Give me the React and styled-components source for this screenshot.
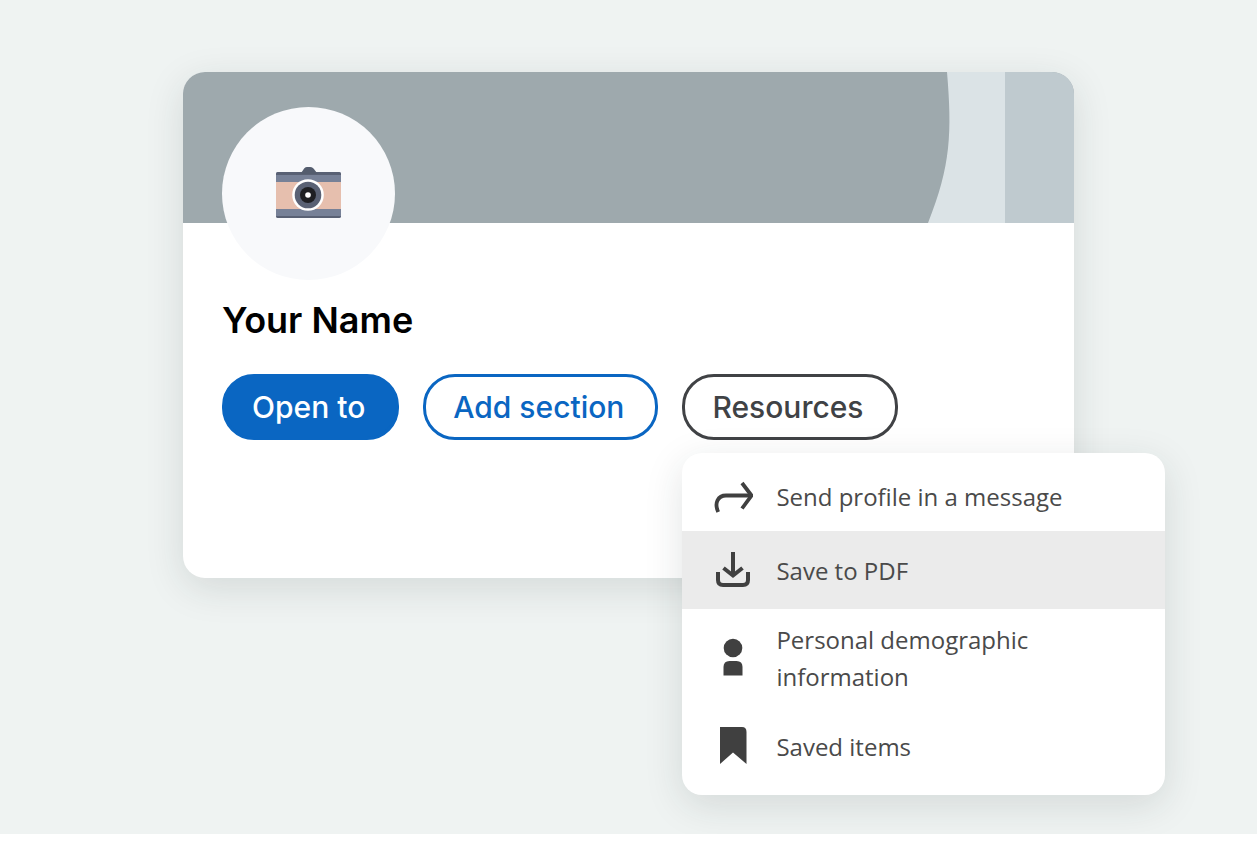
import React from "react";
import styled, { createGlobalStyle, css } from "styled-components";

const GlobalStyle = createGlobalStyle`
  *, *::before, *::after { box-sizing: border-box; }
  body {
    margin: 0;
    background: #ffffff;
    font-family: Inter, "Liberation Sans", sans-serif;
  }
`;

const Stage = styled.main`
  padding: 72px 183px 256px;
  background: #eff3f2;
`;

const Card = styled.section`
  min-height: 506px;
  border-radius: 22px;
  background: #ffffff;
  box-shadow: 0 10px 38px rgba(30, 50, 45, 0.13);
`;

const Banner = styled.div`
  display: flex;
  justify-content: flex-end;
  height: 151px;
  border-radius: 22px 22px 0 0;
  overflow: hidden;
  background: #9ea9ad;
`;

const BannerArt = styled.svg`
  display: block;
  width: 146px;
  height: 151px;
`;

const Profile = styled.div`
  padding: 0 39px 136px;
`;

const Avatar = styled.button`
  display: flex;
  align-items: center;
  justify-content: center;
  width: 173px;
  height: 173px;
  margin-top: -116px;
  padding: 0;
  border: 0;
  border-radius: 50%;
  background: #f8f9fb;
`;

const Name = styled.h1`
  margin: 18px 0 0;
  font-size: 36px;
  line-height: 44px;
  font-weight: 600;
  color: #000000;
`;

const Actions = styled.div`
  display: flex;
  align-items: flex-start;
  gap: 24px;
  margin-top: 32px;
`;

const tones = {
  filled: css`
    border-color: #0a66c2;
    background: #0a66c2;
    color: #ffffff;
  `,
  outline: css`
    border-color: #0a66c2;
    color: #0a66c2;
  `,
  neutral: css`
    border-color: #404245;
    color: #404245;
  `,
};

const Pill = styled.button`
  display: block;
  height: 66px;
  padding: 0 31px 0 27px;
  border: 3px solid;
  border-radius: 32px;
  background: transparent;
  font-family: inherit;
  font-size: 30px;
  line-height: 36px;
  font-weight: 450;
  white-space: nowrap;
  ${({ $tone }) => tones[$tone]}
`;

const Dropdown = styled.div`
  position: relative;
`;

const Menu = styled.ul`
  position: absolute;
  top: calc(100% + 13px);
  left: 0;
  width: 483px;
  margin: 0;
  padding: 0 0 10px;
  list-style: none;
  border-radius: 20px;
  overflow: hidden;
  background: #ffffff;
  box-shadow: 0 10px 38px rgba(30, 50, 45, 0.13);
`;

const MenuItem = styled.button`
  display: flex;
  align-items: center;
  gap: 23px;
  width: 100%;
  min-height: 78px;
  padding: 12px 80px 12px 31px;
  border: 0;
  background: ${({ $active }) => ($active ? "#ebebeb" : "transparent")};
  font-family: "Open Sans", "Noto Sans", sans-serif;
  font-size: 24px;
  line-height: 37px;
  text-align: left;
  color: #4a4a4a;

  li:first-child > & {
    padding-top: 20px;
  }
`;

const Icon = styled.svg`
  flex: none;
  width: 40px;
  height: 40px;
  color: #404040;
`;

function CameraIcon() {
  return (
    <svg width="67" height="54" viewBox="0 0 67 54" aria-hidden="true">
      <rect x="1" y="5" width="65" height="46" rx="2" fill="#778197" />
      <path d="M1 8V7q0-2 2-2h61q2 0 2 2v1z" fill="#596174" />
      <path d="M1 49q0 2 2 2h61q2 0 2-2z" fill="#596174" />
      <path d="M24 7c4-1 4-7 8-7h3c5 0 5 6 9 7z" fill="#545d6e" />
      <rect x="1" y="15" width="65" height="27" fill="#e6bfae" />
      <circle cx="33" cy="28" r="15.8" fill="#ffffff" />
      <circle cx="33" cy="28" r="13.3" fill="#596174" />
      <circle cx="33" cy="28" r="8" fill="#1e1f23" />
      <circle cx="33" cy="28" r="2.8" fill="#ffffff" />
    </svg>
  );
}

function ShareIcon() {
  return (
    <Icon viewBox="0 0 40 40" fill="none" stroke="currentColor" strokeWidth="3.8" aria-hidden="true">
      <path d="M5.200 36C1 27 5 19.500 13 19.500H38" />
      <path d="M29 7L38.500 19.500L29 32.500" />
    </Icon>
  );
}

function DownloadIcon() {
  return (
    <Icon viewBox="0 0 40 40" fill="none" stroke="currentColor" strokeWidth="4" aria-hidden="true">
      <path d="M20 2V25" />
      <path d="M10.500 18L20 25.500L29.500 18" />
      <path d="M5 22V30Q5 35 10 35H30Q35 35 35 30V22" />
    </Icon>
  );
}

function PersonIcon() {
  return (
    <Icon viewBox="0 0 40 40" fill="currentColor" aria-hidden="true">
      <circle cx="20" cy="10" r="9.300" />
      <path d="M10.500 37.500V29Q10.500 23 16.500 23H23.500Q29.500 23 29.500 29V37.500Z" />
    </Icon>
  );
}

function BookmarkIcon() {
  return (
    <Icon viewBox="0 0 40 40" fill="currentColor" aria-hidden="true">
      <path d="M7 1H29Q33.500 1 33.500 6V38L20 26.500L7 38Z" />
    </Icon>
  );
}

const items = [
  { label: "Send profile in a message", Glyph: ShareIcon },
  { label: "Save to PDF", Glyph: DownloadIcon, active: true },
  { label: "Personal demographic information", Glyph: PersonIcon },
  { label: "Saved items", Glyph: BookmarkIcon },
];

export default function App() {
  return (
    <>
      <GlobalStyle />
      <Stage>
        <Card>
          <Banner>
            <BannerArt viewBox="0 0 146 151" aria-hidden="true">
              <path d="M19 0C24 60 23 94 0 151H78V0Z" fill="#dbe3e6" />
              <rect x="77" width="69" height="151" fill="#bfcacf" />
            </BannerArt>
          </Banner>
          <Profile>
            <Avatar type="button" aria-label="Add photo">
              <CameraIcon />
            </Avatar>
            <Name>Your Name</Name>
            <Actions>
              <Pill type="button" $tone="filled">Open to</Pill>
              <Pill type="button" $tone="outline">Add section</Pill>
              <Dropdown>
                <Pill type="button" $tone="neutral" aria-expanded="true">Resources</Pill>
                <Menu>
                  {items.map(({ label, Glyph, active }) => (
                    <li key={label}>
                      <MenuItem type="button" $active={active}>
                        <Glyph />
                        <span>{label}</span>
                      </MenuItem>
                    </li>
                  ))}
                </Menu>
              </Dropdown>
            </Actions>
          </Profile>
        </Card>
      </Stage>
    </>
  );
}
